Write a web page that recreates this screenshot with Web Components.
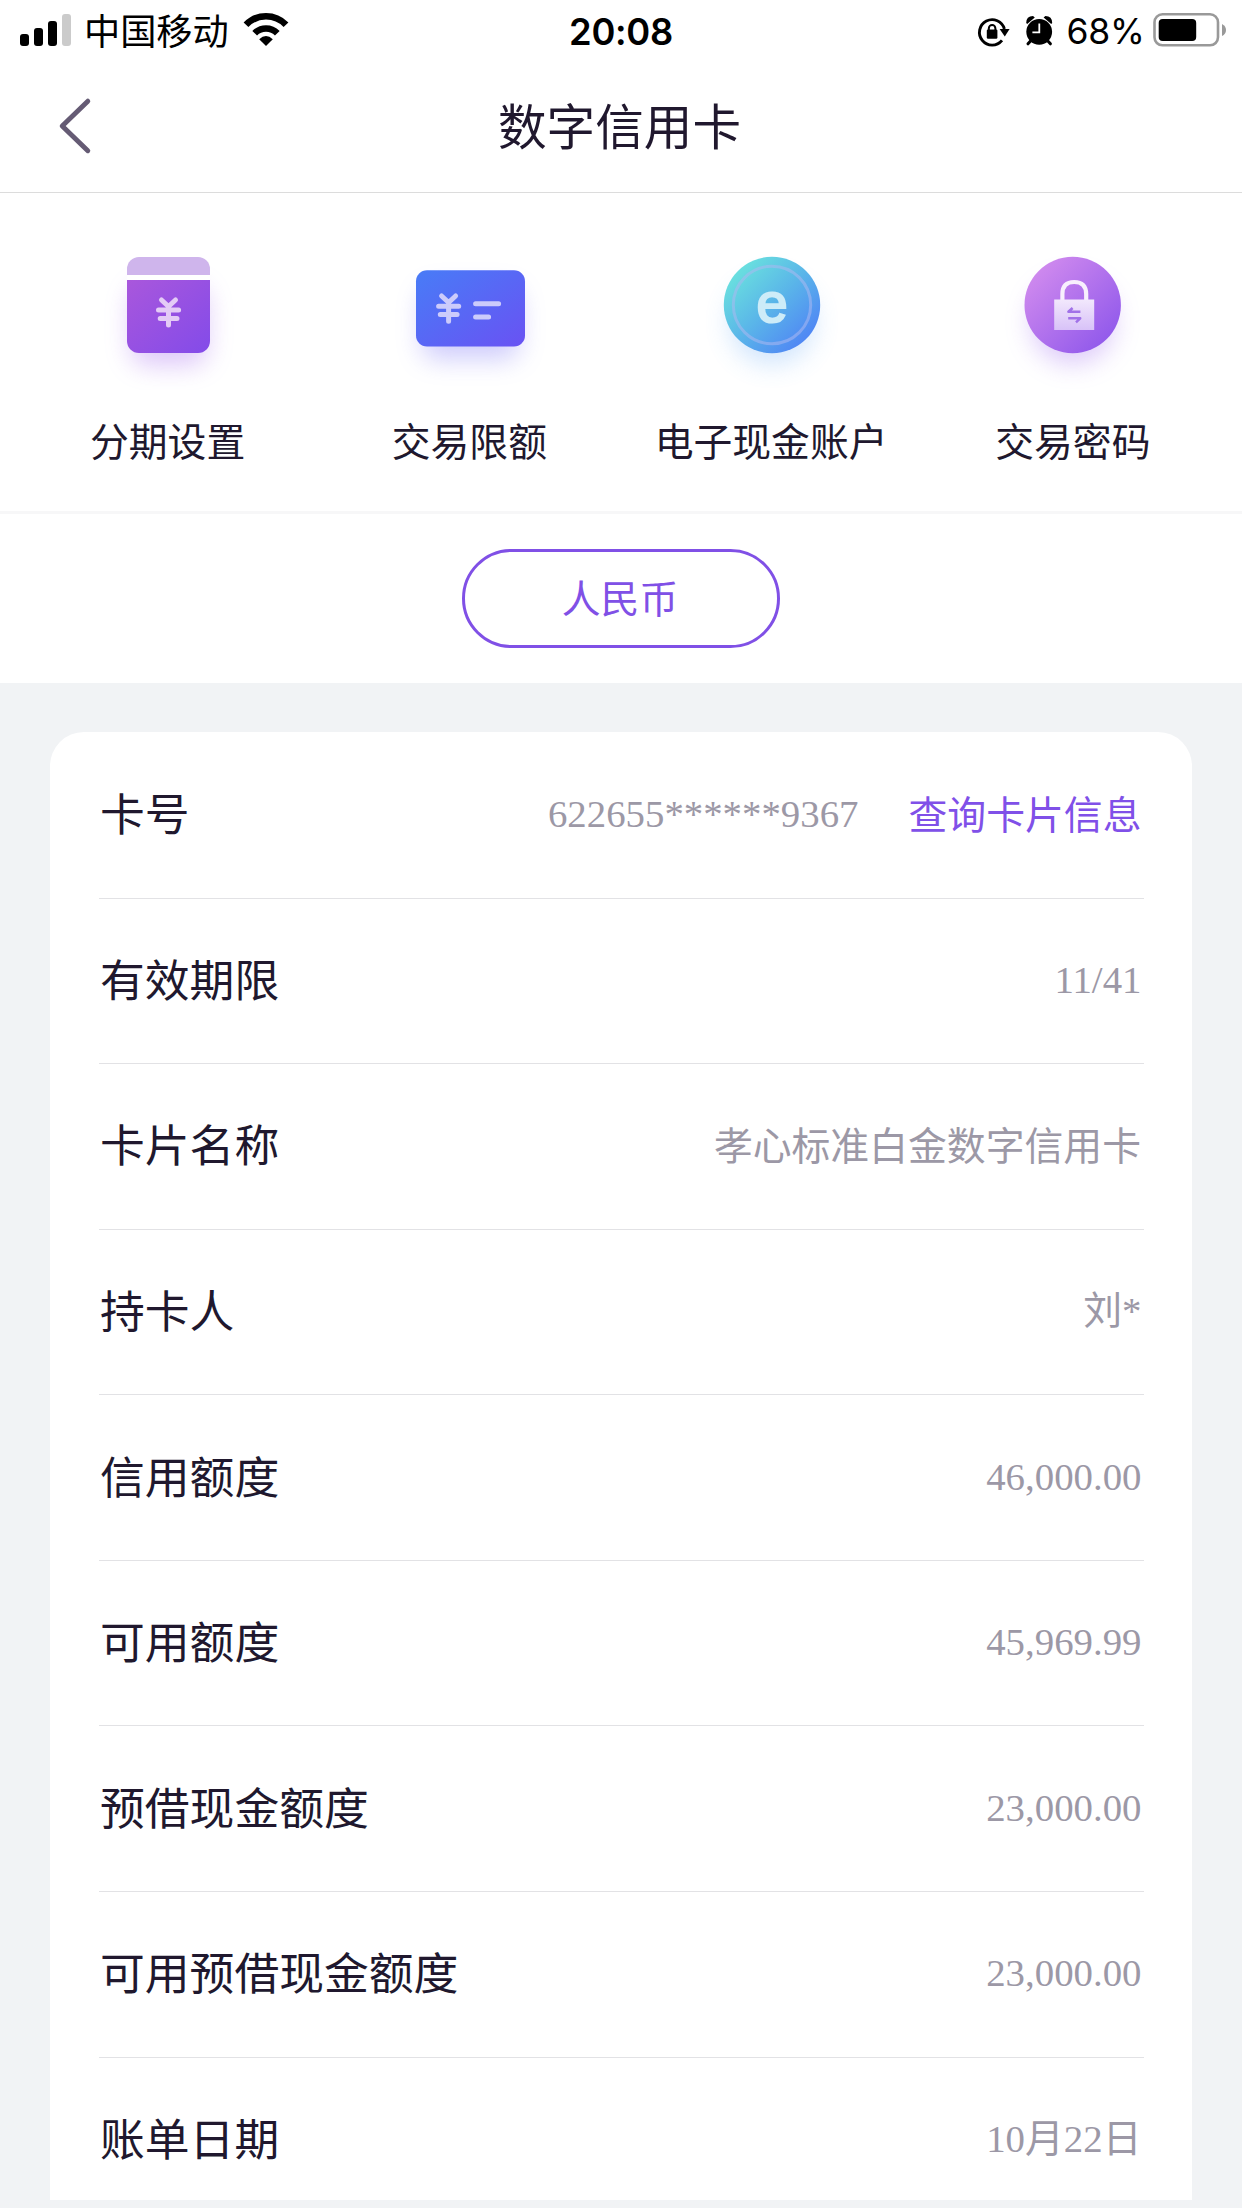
<!DOCTYPE html>
<html lang="zh-CN">
<head>
<meta charset="utf-8">
<title>数字信用卡</title>
<style>
html,body{margin:0;padding:0;background:#f1f3f5}
body{width:1242px;height:2208px;overflow:hidden;font-family:"Liberation Serif","Noto Sans CJK SC",serif;color:#20182e}
</style>
</head>
<body>
<card-page></card-page>
<script>
const define = (name, html, setup) => {
  const template = document.createElement('template');
  template.innerHTML = html;
  customElements.define(name, class extends HTMLElement {
    constructor() {
      super();
      this.attachShadow({ mode: 'open' }).append(template.content.cloneNode(true));
    }
    connectedCallback() { if (setup) setup(this, this.shadowRoot); }
  });
};

define('status-bar', `
<style>
:host{display:flex;height:60px;justify-content:space-between;color:#000;background:#fff}
svg{display:block;height:60px;flex:none}
div{display:flex;flex:1;align-items:flex-start}
.time{flex:none;font:600 36.3px/64px Inter,sans-serif;letter-spacing:-.3px}
.right{justify-content:flex-end}
.carrier{font-size:36.2px;line-height:67px;margin-left:13px;width:147px;white-space:nowrap}
.pct{font:400 35.5px/64px Inter,sans-serif;margin:0 7.5px 0 12px;letter-spacing:-.3px}
</style>
<div>
  <svg width="71" viewBox="0 0 71 60"><g><rect x="20" y="34" width="9" height="12" rx="3"/><rect x="34" y="28" width="9" height="18" rx="3"/><rect x="48" y="21" width="9" height="25" rx="3"/><rect x="62" y="14" width="9" height="32" rx="3" fill="#cbcbcb"/></g></svg>
  <span class="carrier">中国移动</span>
  <svg width="60" style="margin-left:7px" viewBox="238 0 60 60"><g fill="none" stroke="#000" stroke-width="6.6"><path d="M246 24.8A27.7 27.7 0 0 1 286 24.8"/><path d="M254.7 33.2A15.8 15.8 0 0 1 277.3 33.2"/></g><path d="M259.2 39.3Q266 32.6 272.8 39.3L266 46Z"/></svg>
</div>
<span class="time">20:08</span>
<div class="right">
  <svg width="34" viewBox="976 0 34 60"><path d="M1004.4 29A12.7 12.7 0 1 0 1002 40.4" fill="none" stroke="#000" stroke-width="2.9"/><path d="M999.6 29H1009.6L1004.8 36.6Z"/><rect x="986.8" y="29.6" width="10.6" height="9.2" rx="1.2"/><path d="M988.8 31v-2.6a3.3 3.3 0 0 1 6.6 0V31" fill="none" stroke="#000" stroke-width="2"/></svg>
  <svg width="32" style="margin-left:13px" viewBox="1023 0 32 60"><circle cx="1039.2" cy="31.8" r="12.9"/><path d="M1026.2 23Q1026.2 16.2 1033 16L1034.8 17.4L1027.2 24Z M1052.2 23Q1052.2 16.2 1045.4 16L1043.6 17.4L1051.2 24Z"/><path d="M1031 40.5L1028 43.8M1047.4 40.5L1050.4 43.8" stroke="#000" stroke-width="3" stroke-linecap="round"/><path d="M1039.3 23.5V32.4H1032.4" fill="none" stroke="#fff" stroke-width="1.8"/></svg>
  <span class="pct">68%</span>
  <svg width="90" viewBox="1152 0 90 60"><rect x="1154.5" y="14.3" width="63.5" height="31" rx="8" fill="none" stroke="#999" stroke-width="2.6"/><rect x="1158.7" y="19" width="37.5" height="22" rx="4"/><path d="M1222 24Q1226 26 1226 30T1222 36Z" fill="#999"/></svg>
</div>`);

define('nav-bar', `
<style>
:host{display:flex;height:132px;align-items:center;background:#fff;border-bottom:1px solid #dcdcdc}
svg,i{display:block;flex:none;width:150px;height:132px}
i{width:153px}
h1{flex:1;margin:0;padding-top:6px;text-align:center;font-weight:400;font-size:48.6px;line-height:60px}
</style>
<svg viewBox="0 60 150 132"><path d="M87.8 101.2L62.2 126L87.8 150.7" fill="none" stroke="#655b74" stroke-width="4.9" stroke-linecap="round" stroke-linejoin="round"/></svg>
<h1><slot></slot></h1><i></i>`);

const icons = {
  plan: `<svg viewBox="68 230 200 160"><defs><linearGradient id="g" x1="0" y1="0" x2="1" y2="1"><stop stop-color="#a957dc"/><stop offset="1" stop-color="#834be9"/></linearGradient><filter id="b" x="-60%" y="-60%" width="220%" height="220%"><feGaussianBlur stdDeviation="13"/></filter></defs>
  <rect x="131" y="287" width="76" height="78" rx="16" fill="#a163ee" opacity=".36" filter="url(#b)"/><path d="M127 275V269A12 12 0 0 1 139 257H198A12 12 0 0 1 210 269V275Z" fill="#cfb5ec"/><rect x="127" y="275" width="83" height="5" fill="#fff"/><path d="M127 280H210V341A12 12 0 0 1 198 353H139A12 12 0 0 1 127 341Z" fill="url(#g)"/>
  <path d="M161.5 300L168.5 306.5L175.5 300M158.5 310H178.6M160.2 318.4H177M168.5 307V325" fill="none" stroke="#e4cbf6" stroke-width="5" stroke-linecap="round" stroke-linejoin="round"/></svg>`,
  limit: `<svg viewBox="370 230 200 160"><defs><linearGradient id="g" x1="0" y1="0" x2="1" y2="1"><stop stop-color="#487cf7"/><stop offset="1" stop-color="#6952f3"/></linearGradient><filter id="b" x="-60%" y="-60%" width="220%" height="220%"><feGaussianBlur stdDeviation="13"/></filter></defs>
  <rect x="422" y="289" width="97" height="70" rx="14" fill="#716bf5" opacity=".34" filter="url(#b)"/><rect x="416" y="270.3" width="109" height="76.2" rx="11" fill="url(#g)"/>
  <path d="M441.6 296L448.6 302.5L455.6 296M438.6 306.3H458.7M440.3 314.6H457.1M448.6 303V321.3M475.6 303.7H498.6M475.6 316.9H488.6" fill="none" stroke="#cccbfb" stroke-width="5" stroke-linecap="round" stroke-linejoin="round"/></svg>`,
  cash: `<svg viewBox="671.5 230 200 160"><defs><linearGradient id="g" x1=".12" y1=".12" x2=".88" y2=".88"><stop stop-color="#6ae2de"/><stop offset=".5" stop-color="#5ab5e9"/><stop offset="1" stop-color="#4f84f5"/></linearGradient><filter id="b" x="-60%" y="-60%" width="220%" height="220%"><feGaussianBlur stdDeviation="13"/></filter></defs>
  <circle cx="771.5" cy="322" r="42" fill="#65a9f7" opacity=".31" filter="url(#b)"/><circle cx="771.5" cy="305" r="48.2" fill="url(#g)"/><circle cx="771.5" cy="305" r="38.7" fill="none" stroke="#acb8f1" stroke-opacity=".55" stroke-width="3"/>
  <text x="771.5" y="322.2" text-anchor="middle" font-family="Liberation Sans,sans-serif" font-weight="400" font-size="56" fill="#cdecf8" stroke="#cdecf8" stroke-width="2.2">e</text></svg>`,
  lock: `<svg viewBox="973.8 230 200 160"><defs><linearGradient id="g" x1=".12" y1=".12" x2=".88" y2=".88"><stop stop-color="#d08aee"/><stop offset="1" stop-color="#9159eb"/></linearGradient><linearGradient id="w" x1="0" y1="0" x2="0" y2="1"><stop stop-color="#f2e8fc"/><stop offset="1" stop-color="#d8c2f8"/></linearGradient><filter id="b" x="-60%" y="-60%" width="220%" height="220%"><feGaussianBlur stdDeviation="13"/></filter></defs>
  <circle cx="1072.5" cy="322" r="42" fill="#a06df0" opacity=".36" filter="url(#b)"/><circle cx="1072.5" cy="305" r="48.2" fill="url(#g)"/>
  <path d="M1062.2 300V294Q1062.2 282 1074 282T1086 294V300" fill="none" stroke="#f8effd" stroke-width="4.2"/><rect x="1054" y="299.5" width="40" height="30.5" fill="url(#w)"/>
  <path d="M1080.2 311.8H1068.2L1072.4 308M1068 318.3H1080L1075.8 322.3" fill="none" stroke="#a171e8" stroke-width="2.5" stroke-linejoin="round"/></svg>`
};

define('quick-action', `
<style>
:host{display:flex;flex-direction:column;align-items:center;gap:23px;flex:1}
.icon{width:200px;height:160px}
svg{display:block;width:200px;height:160px}
.label{font-size:38.8px;line-height:60px;white-space:nowrap;margin-right:1.5px}
</style>
<div class="icon"></div><span class="label"><slot></slot></span>`,
(host, root) => { root.querySelector('.icon').innerHTML = icons[host.getAttribute('icon')]; });

define('action-row', `
<style>:host{display:flex;box-sizing:border-box;height:321px;padding:37px 17.5px 0;background:#fff;border-bottom:3px solid #f7f7f8}</style>
<slot></slot>`);

define('currency-tabs', `
<style>
:host{display:flex;justify-content:center;box-sizing:border-box;height:169px;padding-top:35px;background:#fff}
button{box-sizing:border-box;width:318px;height:99px;padding:2px 2px 0 0;border:3px solid #8050e6;border-radius:50px;background:none;color:#8050e6;font:inherit;font-size:38.8px;line-height:60px}
</style>
<button><slot></slot></button>`);

define('info-row', `
<style>
:host{display:flex;align-items:center;box-sizing:border-box;height:165.57px;border-bottom:1px solid #e2e2e5;white-space:nowrap;line-height:60px}
:host(:last-of-type){border-bottom-color:transparent}
.label{font-size:44.8px;padding:2px 0 0 1.5px;flex:1}
.value{font-size:38.85px;color:#9c98a6;padding:0 2px 2px 0}
:host([cjk]) .value{padding:2px 2.5px 0 0}
::slotted(a){color:#8050e8;margin-left:50px;vertical-align:-2px;line-height:1}
</style>
<span class="label"></span><span class="value"><slot></slot></span>`,
(host, root) => { root.querySelector('.label').textContent = host.getAttribute('label'); });

define('info-card', `
<style>:host{display:block;box-sizing:border-box;height:1468px;overflow:hidden;margin:49px 50px 0;padding:1px 48.5px 0 48.5px;background:#fff;border-radius:34px 34px 0 0}</style>
<slot></slot>`);

define('card-page', `
<style>:host{display:flex;flex-direction:column;width:1242px;height:2208px;background:#f1f3f5}</style>
<status-bar></status-bar>
<nav-bar>数字信用卡</nav-bar>
<action-row>
  <quick-action icon="plan">分期设置</quick-action>
  <quick-action icon="limit">交易限额</quick-action>
  <quick-action icon="cash">电子现金账户</quick-action>
  <quick-action icon="lock">交易密码</quick-action>
</action-row>
<currency-tabs>人民币</currency-tabs>
<info-card>
  <info-row label="卡号">622655******9367<a>查询卡片信息</a></info-row>
  <info-row label="有效期限">11/41</info-row>
  <info-row label="卡片名称" cjk>孝心标准白金数字信用卡</info-row>
  <info-row label="持卡人">刘*</info-row>
  <info-row label="信用额度">46,000.00</info-row>
  <info-row label="可用额度">45,969.99</info-row>
  <info-row label="预借现金额度">23,000.00</info-row>
  <info-row label="可用预借现金额度">23,000.00</info-row>
  <info-row label="账单日期">10月22日</info-row>
</info-card>`);
</script>
</body>
</html>
